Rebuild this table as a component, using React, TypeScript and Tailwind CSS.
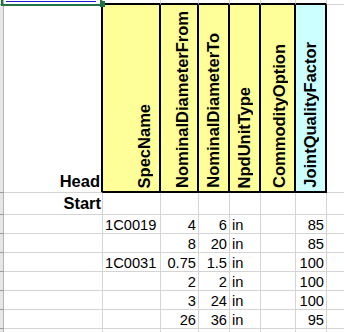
import React from "react";

const widths = ["w-[99px]", "w-[58px]", "w-[38px]", "w-[31px]", "w-[31px]", "w-[35px]", "w-[31px]"];
const headers = [
  "SpecName",
  "NominalDiameterFrom",
  "NominalDiameterTo",
  "NpdUnitType",
  "CommodityOption",
  "JointQualityFactor",
];
const align = ["left", "right", "right", "left", "left", "right"];

const data: string[][] = [
  ["1C0019", "4", "6", "in", "", "85"],
  ["", "8", "20", "in", "", "85"],
  ["1C0031", "0.75", "1.5", "in", "", "100"],
  ["", "2", "2", "in", "", "100"],
  ["", "3", "24", "in", "", "100"],
  ["", "26", "36", "in", "", "95"],
  ["", "", "", "", "", ""],
];

function Strip() {
  return <div className="w-[4px] shrink-0 self-stretch bg-[#e6e6e6] border-r border-r-[#b4b4b4] border-b border-b-[#9a9a9a]" />;
}

function DataRow({ cells }: { cells: string[] }) {
  return (
    <div className="flex h-[19px] shrink-0">
      <Strip />
      <div className={`${widths[0]} shrink-0 border-r border-b border-[#d4d4d4]`} />
      {cells.map((c, i) => (
        <div
          key={i}
          className={`${widths[i + 1]} shrink-0 border-r border-b border-[#d4d4d4] flex items-end overflow-hidden ${
            align[i] === "right" ? "justify-end pr-[2px]" : "justify-start pl-[2px]"
          }`}
        >
          <span className="text-[14.67px] leading-[normal] whitespace-nowrap text-black">{c}</span>
        </div>
      ))}
      <div className="flex-1 border-b border-[#d4d4d4]" />
    </div>
  );
}

export default function App() {
  return (
    <div className="relative w-[344px] h-[332px] overflow-hidden bg-white font-['Liberation_Sans',Arial,sans-serif] flex flex-col">
      {/* Row 1 (mostly scrolled off) */}
      <div className="flex h-[5px] shrink-0">
        <Strip />
        <div className={`${widths[0]} shrink-0 border-r border-b border-[#d4d4d4]`}>
          <div className="ml-[2px] mt-[1px] w-[90px] h-[1px] bg-[#1c1ccf]" />
        </div>
        {headers.map((_, i) => (
          <div
            key={i}
            className={`${widths[i + 1]} shrink-0 border-r border-r-[#d4d4d4] border-b-2 border-b-black`}
          />
        ))}
        <div className="flex-1 border-b border-[#d4d4d4]" />
      </div>

      {/* Header row */}
      <div className="flex h-[188px] shrink-0">
        <Strip />
        <div className={`${widths[0]} shrink-0 border-r-2 border-r-black border-b border-b-[#d4d4d4] flex items-end justify-end pr-[1px] pb-[1px]`}>
          <span className="text-[16.5px] font-bold leading-[normal] text-black">Head</span>
        </div>
        {headers.map((h, i) => (
          <div
            key={h}
            className={`${widths[i + 1]} shrink-0 ${
              i === 5 ? "bg-[#ccffff]" : "bg-[#ffff99]"
            } border-r-2 border-r-black border-b-2 border-b-black flex items-end justify-end pr-[5px] pb-[3px] overflow-hidden`}
          >
            <span className="[writing-mode:vertical-rl] rotate-180 text-[16.5px] font-bold leading-[normal] whitespace-nowrap text-black">
              {h}
            </span>
          </div>
        ))}
        <div className="flex-1 border-b border-[#d4d4d4]" />
      </div>

      {/* Start row */}
      <div className="flex h-[22px] shrink-0">
        <Strip />
        <div className={`${widths[0]} shrink-0 border-r border-b border-[#d4d4d4] flex items-end justify-end pr-[1px] pb-[1px]`}>
          <span className="text-[16.5px] font-bold leading-[normal] text-black">Start</span>
        </div>
        {headers.map((_, i) => (
          <div key={i} className={`${widths[i + 1]} shrink-0 border-r border-b border-[#d4d4d4]`} />
        ))}
        <div className="flex-1 border-b border-[#d4d4d4]" />
      </div>

      {data.map((r, i) => (
        <DataRow key={i} cells={r} />
      ))}

      {/* Selection of A1 */}
      <div className="absolute left-[1px] top-[-10px] w-[101px] h-[16px] border-2 border-[#217346]" />
      <div className="absolute left-[100px] top-[1px] w-[5px] h-[6px] bg-[#217346]" />
    </div>
  );
}
